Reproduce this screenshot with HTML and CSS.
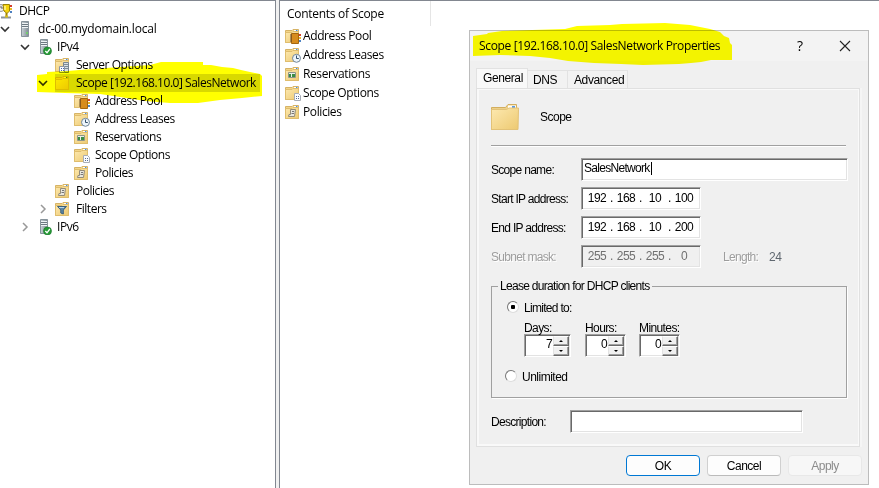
FILE: index.html
```html
<!DOCTYPE html>
<html lang="en">
<head>
<meta charset="utf-8">
<title>DHCP</title>
<link rel="stylesheet" href="styles.css">
</head>
<body>
<svg class="defs" width="0" height="0" aria-hidden="true">
  <defs>
    <linearGradient id="fold" x1="0" y1="0" x2="1" y2="1"><stop offset="0" stop-color="#fde9b0"/><stop offset="1" stop-color="#edc971"/></linearGradient>
    <linearGradient id="srv" x1="0" y1="0" x2="1" y2="0"><stop offset="0" stop-color="#c9d1d6"/><stop offset="1" stop-color="#7f8c94"/></linearGradient>
    <symbol id="folder" viewBox="0 0 16 16">
      <path d="M.5 14.500V2.500H7L8 1.500h5.500v13z" fill="#f3d588" stroke="#d6b366"/>
      <path d="M9 2.500h4" stroke="#fff"/><path d="M11 2.500h1.500" stroke="#4a8fdc"/>
      <path d="M.5 4.500H7l1-1h5.500v11H.5z" fill="url(#fold)" stroke="#dfbd6d"/>
    </symbol>
    <symbol id="pool" viewBox="0 0 16 16"><use href="#folder" width="16" height="16"/>
      <path d="M14 6h2v2h-2z" fill="#d8472b"/><path d="M14 9h2v2h-2z" fill="#e8b72c"/><path d="M14 12h2v2h-2z" fill="#4d83c4"/>
      <path d="M6.500 5.500h7v10h-7z" fill="#d78c1d" stroke="#a5660f"/><path d="M5 7h2M5 9h2M5 11h2M5 13h2" stroke="#6b4b28"/>
    </symbol>
    <symbol id="leases" viewBox="0 0 16 16"><use href="#folder" width="16" height="16"/>
      <circle cx="11.500" cy="11.300" r="4" fill="#edf5fb" stroke="#71879a"/><path d="M11.500 8.500v3h2.300" fill="none" stroke="#34506b"/>
    </symbol>
    <symbol id="reserv" viewBox="0 0 16 16"><use href="#folder" width="16" height="16"/>
      <path d="M3.500 6.500h7v5h-7z" fill="#e9eee7" stroke="#8d9489"/><path d="M4 8h2v3H4zM7 8h3v3H7z" fill="#3b8d43"/>
    </symbol>
    <symbol id="options" viewBox="0 0 16 16"><use href="#folder" width="16" height="16"/>
      <path d="M9.500 8.500h4l2 2v5h-6z" fill="#fafcff" stroke="#a8adb5"/><path d="M11 11.500h1m1 0h1M11 13.500h1m1 0h1" stroke="#596c91"/>
    </symbol>
    <symbol id="policies" viewBox="0 0 16 16"><use href="#folder" width="16" height="16"/>
      <path d="M5.500 5.500h5l-1 7h-6l.5-2h1.500z" fill="#e9e6dc" stroke="#948c79"/><path d="M7 7.500h2M6.500 9.500H9" stroke="#777"/>
    </symbol>
    <symbol id="filters" viewBox="0 0 16 16"><use href="#folder" width="16" height="16"/>
      <path d="M2.500 5.500h9L8.300 9v4l-2.500-1V9z" fill="#5c87a6" stroke="#3e617d"/><path d="M4 6.500h5" stroke="#b6d4e7"/>
    </symbol>
    <symbol id="srvopt" viewBox="0 0 16 16"><use href="#folder" width="16" height="16"/>
      <path d="M8.500 5.500h5v10h-5z" fill="#d8e0e5" stroke="#798691"/><path d="M9 7.500h4M9 9.500h4M9 11.500h4" stroke="#7e8c98"/>
      <path d="M4.500 9.500h5v6h-5z" fill="#f8faff" stroke="#8d96a4"/><path d="M6 11.500h1m1 0h1M6 13.500h1m1 0h1" stroke="#486ab0"/>
    </symbol>
    <symbol id="server" viewBox="0 0 16 16">
      <path d="M4.500.5h7v15h-7z" fill="url(#srv)" stroke="#87939b"/><path d="M5 2.500h6M5 4.500h6M5 6.500h6" stroke="#eef3f5"/><path d="M5 3.500h6M5 5.500h6" stroke="#6d7981"/><path d="M9 11h2v2H9z" fill="#71cd6d"/>
    </symbol>
    <symbol id="serverok" viewBox="0 0 16 16">
      <path d="M1.500.5h7v14h-7z" fill="url(#srv)" stroke="#87939b"/><path d="M2 2.500h6M2 4.500h6M2 6.500h6" stroke="#eef3f5"/><path d="M2 3.500h6M2 5.500h6" stroke="#6d7981"/>
      <circle cx="8.500" cy="12" r="4" fill="#259a35" stroke="#187428" stroke-width=".6"/><path d="M6.300 12l1.700 1.800L10.800 10" fill="none" stroke="#fff" stroke-width="1.300"/>
    </symbol>
    <symbol id="dhcp" viewBox="0 0 16 16">
      <circle cx="4" cy="5" r="3.500" fill="#eee" stroke="#999"/><path d="M4 3v2h2" fill="none" stroke="#666"/>
      <path d="M6 1.500h6.500V8L10 10.500 7 8z" fill="#f6d40c" stroke="#9c8406"/><path d="M8 3v4" stroke="#fff79a" stroke-width="1.500"/>
      <path d="M13 2h2v2h-2z" fill="#d43d2d"/><path d="M13 5h2v2h-2z" fill="#e9b926"/><path d="M13 8h2v2h-2z" fill="#4c7fc0"/>
      <path d="M9.500 10v4" stroke="#a08208" stroke-width="2"/><path d="M4 14.500h10" stroke="#8c949a" stroke-width="2"/><path d="M8 13.500h3" stroke="#d7bd1d" stroke-width="2"/>
    </symbol>
    <symbol id="down" viewBox="0 0 10 10"><path d="M1 3l4 4 4-4" fill="none" stroke="#333" stroke-width="1.600"/></symbol>
    <symbol id="right" viewBox="0 0 10 10"><path d="M3 1l4 4-4 4" fill="none" stroke="#999" stroke-width="1.500"/></symbol>
  </defs>
</svg>

<main class="console">
  <nav class="tree">
    <div class="node root"><svg class="ico"><use href="#dhcp"/></svg><span>DHCP</span></div>
    <div class="node l1"><svg class="chev"><use href="#down"/></svg><svg class="ico"><use href="#server"/></svg><span class="host">dc-00.mydomain.local</span></div>
    <div class="node l2"><svg class="chev"><use href="#down"/></svg><svg class="ico"><use href="#serverok"/></svg><span>IPv4</span></div>
    <div class="node l3"><svg class="ico"><use href="#srvopt"/></svg><span>Server Options</span></div>
    <div class="node l3 open"><svg class="chev"><use href="#down"/></svg><div class="selected"><svg class="ico"><use href="#folder"/></svg><span>Scope [192.168.10.0] SalesNetwork</span></div></div>
    <div class="node l4"><svg class="ico"><use href="#pool"/></svg><span>Address Pool</span></div>
    <div class="node l4"><svg class="ico"><use href="#leases"/></svg><span>Address Leases</span></div>
    <div class="node l4"><svg class="ico"><use href="#reserv"/></svg><span>Reservations</span></div>
    <div class="node l4"><svg class="ico"><use href="#options"/></svg><span>Scope Options</span></div>
    <div class="node l4"><svg class="ico"><use href="#policies"/></svg><span>Policies</span></div>
    <div class="node l3"><svg class="ico"><use href="#policies"/></svg><span>Policies</span></div>
    <div class="node l3 open"><svg class="chev"><use href="#right"/></svg><svg class="ico"><use href="#filters"/></svg><span>Filters</span></div>
    <div class="node l2"><svg class="chev"><use href="#right"/></svg><svg class="ico"><use href="#serverok"/></svg><span>IPv6</span></div>
  </nav>
  <section class="contents">
    <div class="head"><span>Contents of Scope</span></div>
    <div class="item"><svg class="ico"><use href="#pool"/></svg><span>Address Pool</span></div>
    <div class="item"><svg class="ico"><use href="#leases"/></svg><span>Address Leases</span></div>
    <div class="item"><svg class="ico"><use href="#reserv"/></svg><span>Reservations</span></div>
    <div class="item"><svg class="ico"><use href="#options"/></svg><span>Scope Options</span></div>
    <div class="item"><svg class="ico"><use href="#policies"/></svg><span>Policies</span></div>
  </section>
</main>

<div class="dialog">
  <div class="titlebar">
    <span class="title">Scope [192.168.10.0] SalesNetwork Properties</span>
    <span class="help">?</span>
    <svg class="close" viewBox="0 0 12 12"><path d="M1 1l10 10M11 1L1 11" stroke="#222" stroke-width="1.100"/></svg>
  </div>
  <div class="tabs"><div class="tab active">General</div><div class="tab dns">DNS</div><div class="tab adv">Advanced</div></div>
  <div class="page">
    <div class="banner"><svg class="big" viewBox="0 0 30 28">
      <path d="M1.500 26.500v-22h14l2.500-3h8.500v25z" fill="#ecd08a" stroke="#d3ae5e"/><path d="M18 2.500h8v3h-8z" fill="#fff"/><path d="M22 3h3v2h-3z" fill="#5a9ae4"/>
      <path d="M1.500 6.500h15l2.500-1.500h9.500l-.5 21.500H1.500z" fill="url(#fold)" stroke="#e3c277"/></svg><span>Scope</span></div>
    <div class="rule"></div>
    <div class="row first"><label>Scope name:</label><div class="box wide"><span class="value">SalesNetwork</span><i class="caret"></i></div></div>
    <div class="row"><label>Start IP address:</label><div class="box ip"><b>192</b><i>.</i><b>168</b><i>.</i><b>10</b><i>.</i><b>100</b></div></div>
    <div class="row"><label>End IP address:</label><div class="box ip"><b>192</b><i>.</i><b>168</b><i>.</i><b>10</b><i>.</i><b>200</b></div></div>
    <div class="row"><label class="off">Subnet mask:</label><div class="box ip dim"><b>255</b><i>.</i><b>255</b><i>.</i><b>255</b><i>.</i><b>0</b></div><span class="length off">Length:</span><span class="bits">24</span></div>
    <fieldset class="lease">
      <legend>Lease duration for DHCP clients</legend>
      <div class="radio"><i class="dot on"></i><span>Limited to:</span></div>
      <div class="spins">
        <div class="spin days"><span>Days:</span><div class="box num"><b>7</b><div class="arrows"><i class="up"></i><i class="dn"></i></div></div></div>
        <div class="spin hours"><span>Hours:</span><div class="box num"><b>0</b><div class="arrows"><i class="up"></i><i class="dn"></i></div></div></div>
        <div class="spin mins"><span>Minutes:</span><div class="box num"><b>0</b><div class="arrows"><i class="up"></i><i class="dn"></i></div></div></div>
      </div>
      <div class="radio unlimited"><i class="dot"></i><span>Unlimited</span></div>
    </fieldset>
    <div class="row desc"><label>Description:</label><div class="box text"></div></div>
  </div>
  <div class="buttons"><div class="btn primary">OK</div><div class="btn">Cancel</div><div class="btn disabled">Apply</div></div>
</div>

<svg class="marker" viewBox="0 0 879 488" aria-hidden="true">
  <path d="M37 75l10-1v-2l20-1 25-2 28-2 30-2 11-3h42v3l8 0 11 2 11 1 8 2 9 2 10 2 2 2v20l-20 2-22 2-22 3h-28l-25-2-25-4-20-3-35-1-28-1H37z"/>
  <path d="M473 36l14-2 1-1 14-2 63-2 12-3 33-1 12-1 43-1 25 2 20 4 10 3 4 4 5 2 1 5 2 2v15h-21l-10 2-10 1-12 1-36 1-22-1-27-1-26-2-18-3-20-2-30-1-27 1z"/>
</svg>
</body>
</html>
```
FILE: styles.css
```css
* { box-sizing: border-box; }
body { margin: 0; width: 879px; height: 488px; overflow: hidden; background: #fff; color: #000; font: 12px/18px "Open Sans", sans-serif; letter-spacing: -.47px; }
span, label, b, legend, .tab, .btn { white-space: nowrap; }
b { font-weight: 400; }
i { font-style: normal; }
.defs { position: absolute; }
.console { display: flex; height: 488px; background: #f0f0f0; }
.tree { width: 276px; border-top: 1px solid #828790; border-right: 1px solid #828790; background: #fff; padding-top: 1px; overflow: hidden; }
.node { display: flex; align-items: center; height: 18px; }
.ico { width: 16px; height: 16px; flex: none; }
.chev { width: 10px; height: 10px; flex: none; margin-right: 10px; }
.node > .ico + span { margin-left: 5px; }
.root { margin-left: -3px; }
.root > .ico + span { margin-left: 6px; }
.l1 { padding-left: 0; }
.l1 .chev { margin-right: 7px; }
.host { letter-spacing: -.2px; }
.l2 { padding-left: 20px; }
.l2 .chev { margin-right: 9px; }
.l2 > .ico + span { margin-left: 2px; }
.l3 { padding-left: 55px; }
.l3.open { padding-left: 38px; }
.l3.open .chev { margin-right: 7px; }
.selected { display: flex; align-items: center; height: 18px; width: 205px; background: #d9d9d9; }
.selected span { margin-left: 5px; }
.l4 { padding-left: 74px; }
.contents { flex: 1; margin-left: 3px; background: #fff; border-top: 1px solid #828790; border-left: 1px solid #828790; letter-spacing: -.4px; }
.head { width: 151px; height: 25px; padding: 4px 0 0 7px; border-right: 1px solid #e5e5e5; letter-spacing: -.28px; }
.item { display: flex; align-items: center; height: 19px; padding-left: 5px; }
.item span { margin-left: 2px; }

.dialog { position: absolute; left: 469px; top: 30px; width: 400px; height: 455px; border: 1px solid #bcbcbc; background: #f0f0f0; font: 12px/14px "Liberation Sans", sans-serif; letter-spacing: -.7px; }
.titlebar { display: flex; align-items: center; height: 30px; padding-left: 9px; background: #f3f3f3; font-family: "Open Sans", sans-serif; font-size: 12px; letter-spacing: -.35px; }
.title { width: 317px; }
.help { width: 43px; padding-left: 1px; font-size: 14px; }
.close { width: 12px; height: 12px; }
.tabs { display: flex; align-items: flex-end; height: 27px; padding-left: 6px; letter-spacing: -.4px; }
.tab { height: 18px; border: 1px solid #e2e2e2; border-width: 1px 1px 0 0; background: #f2f2f2; padding: 2px 0 0 5px; }
.tab.active { width: 52px; height: 20px; border-left-width: 1px; background: #f9f9f9; padding-left: 6px; }
.dns { width: 40px; }
.tab.adv { width: 60px; padding-left: 6px; }
.page { width: 384px; height: 359px; margin-left: 6px; padding: 12px 0 0 12px; border: 1px solid #e0e0e0; box-shadow: inset 2px 1px #f9f9f9, inset -1px -2px #f9f9f9, 2px 0 #f5f5f5; }
.banner { display: flex; align-items: center; height: 32px; }
.big { width: 30px; height: 28px; margin-left: 1px; }
.banner span { margin: 0 0 0 20px; letter-spacing: -.5px; }
.rule { width: 355px; height: 2px; margin: 12px 0 0 2px; background: #a0a0a0; border-bottom: 1px solid #fff; }
.row { display: flex; align-items: center; height: 22px; margin: 7px 0 0 2px; }
.row.first { margin-top: 11px; }
.row label { width: 90px; padding-top: 2px; }
.off { color: #9d9d9d; text-shadow: 1px 1px #fff; }
.box { height: 23px; background: #fff; border: 1px solid #a0a0a0; border-right-color: #fff; border-bottom-color: #fff; box-shadow: inset 1px 1px #696969, inset -1px -1px #e3e3e3; }
.wide { display: flex; width: 267px; padding: 2px 0 0 2px; }
.caret { width: 1px; height: 13px; background: #000; margin: 1px 0 0 1px; }
.ip { display: grid; grid-template-columns: 26px 3px 26px 3px 26px 3px 26px; width: 120px; padding: 3px 0 0 2px; text-align: center; letter-spacing: -.5px; }
.box.dim { background: #f0f0f0; color: #707070; }
.length { width: 46px; margin-left: 22px; padding-top: 2px; }
.bits { color: #606870; padding-top: 2px; letter-spacing: -.5px; }
.lease { position: relative; width: 356px; height: 119px; margin: 12px 0 0 2px; padding: 0; border: 1px solid #a0a0a0; box-shadow: 1px 1px #fff; }
.lease legend { margin-left: 6px; padding: 1px 2px 0; line-height: 13px; }
.radio { display: flex; align-items: center; height: 14px; margin: 7px 0 0 15px; }
.radio span { padding-top: 2px; }
.dot { width: 12px; height: 12px; border-radius: 50%; background: #fff; border: 1px solid; border-color: #777 #ddd #ddd #777; margin-right: 5px; }
.dot.on { background: radial-gradient(circle, #000 0 2px, #fff 2.500px); }
.spins { display: flex; margin: 6px 0 0 32px; }
.spin span { display: block; height: 14px; padding-top: 1px; letter-spacing: -.6px; }
.days { width: 61px; }
.hours { width: 54px; }
.num { display: flex; width: 41px; height: 23px; padding: 1px; }
.days .num { width: 47px; }
.num b { flex: 1; text-align: right; padding: 1px 1px 0 0; }
.arrows { width: 16px; height: 20px; }
.arrows i { display: flex; justify-content: center; align-items: center; height: 10px; background: #f0f0f0; border: 1px solid; border-color: #fff #696969 #696969 #e3e3e3; box-shadow: inset -1px -1px #a0a0a0; }
.arrows i::after { content: ""; border: 2px solid transparent; border-top-width: 0; border-bottom-color: #000; }
.arrows .dn::after { border-width: 2px 2px 0; border-color: #000 transparent transparent; }
.unlimited { margin: 12px 0 0 13px; letter-spacing: -.5px; }
.desc { margin-top: 12px; }
.desc label { width: 79px; }
.text { width: 233px; }
.buttons { display: flex; gap: 7px; margin: 8px 0 0 156px; }
.btn { width: 74px; height: 21px; border: 1px solid #d0d0d0; border-bottom-color: #bbb; border-radius: 4px; background: #fdfdfd; text-align: center; line-height: 20px; letter-spacing: -.5px; }
.btn.primary { border-color: #0078d4; }
.btn.disabled { border-color: #e8e8e8; background: #f7f7f7; color: #8c8c8c; }
.marker { position: absolute; left: 0; top: 0; width: 879px; height: 488px; fill: #ff0; mix-blend-mode: multiply; pointer-events: none; }
```
